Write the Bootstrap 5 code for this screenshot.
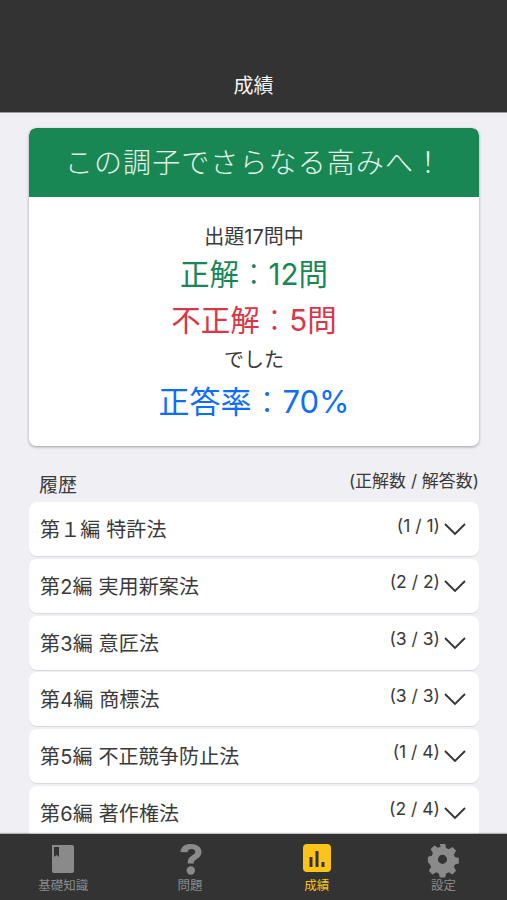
<!DOCTYPE html>
<html lang="ja">
<head>
<meta charset="utf-8">
<title>成績</title>
<link rel="stylesheet" href="https://cdn.jsdelivr.net/npm/bootstrap@5.3.0/dist/css/bootstrap.min.css">
<style>
html,body{height:100%;overflow:hidden}
body{font-family:Inter,"Noto Sans CJK JP",sans-serif;background:#efeff4;color:#3a3a3a}
.app-shell{height:900px}
.top-bar{height:114px;background:#333;color:#f2f2f2;font-size:20px;line-height:28px;padding-bottom:12px;border-bottom:1px solid #999}
.main-area{padding:15px 28px 0 29px;min-height:0;overflow:hidden}
.score-card{border-radius:7px;border:0;box-shadow:0 1px 3px rgba(0,0,0,.35);height:318px}
.score-head{background:#198754;color:#e4f3ea;height:69px;font-size:28px;font-weight:300;line-height:71px;border-radius:7px 7px 0 0;letter-spacing:1.100px}
.score-body{padding-top:25px}
.line-s{font-size:20px;line-height:30px}
.line-first{margin-bottom:-1px}
.line-l{font-size:29.500px;line-height:46px}
.line-then{margin-top:2px;margin-bottom:2px}
.line-xl{font-size:31px;line-height:50px}
.thin-colon{font-weight:300}
.hist-head{margin-top:23px;height:33px;padding-left:10px}
.hist-title{font-size:19px;line-height:30px;padding-top:2px}
.hist-note{font-size:17px;line-height:24px}
.hist-list{gap:2.700px}
.hist-row{height:54px;flex:none;border-radius:8px;background:#fff;padding:0 12px 0 11px;box-shadow:0 1px 1px rgba(0,0,0,.1);font-size:20px;letter-spacing:.15px}
.hist-name{padding-top:2px}
.hist-count{font-size:17.500px;line-height:24px;margin-top:-7px;margin-right:3px;letter-spacing:0}
.tab-bar{height:66px;flex:none;background:#333;box-shadow:0 -1px 1px rgba(0,0,0,.25)}
.tab-item{flex:1;color:#8a8a8a;font-size:12.500px;line-height:15px;padding-top:10px}
.tab-item.on{color:#fcc419}
.tab-ico{height:34px;width:34px}
</style>
</head>
<body>
<div class="app-shell d-flex flex-column">
  <header class="top-bar flex-none d-flex align-items-end justify-content-center">成績</header>
  <main class="main-area flex-grow-1">
    <section class="card score-card overflow-hidden">
      <div class="score-head text-center">この調子でさらなる高みへ！</div>
      <div class="score-body text-center">
        <div class="line-s line-first">出題17問中</div>
        <div class="line-l text-success">正解<span class="thin-colon">：</span>12問</div>
        <div class="line-l text-danger">不正解<span class="thin-colon">：</span>5問</div>
        <div class="line-s line-then">でした</div>
        <div class="line-xl text-primary">正答率<span class="thin-colon">：</span>70%</div>
      </div>
    </section>
    <div class="hist-head d-flex justify-content-between align-items-start">
      <div class="hist-title">履歴</div>
      <div class="hist-note">(正解数 / 解答数)</div>
    </div>
    <div class="hist-list d-flex flex-column">
      <div class="hist-row d-flex align-items-center justify-content-between"><span class="hist-name">第１編 特許法</span><span class="d-flex align-items-center"><span class="hist-count">(1 / 1)</span><svg width="24" height="14" viewBox="0 0 24 14"><path d="M2 2l10 10L22 2" fill="none" stroke="#333" stroke-width="1.800"/></svg></span></div>
      <div class="hist-row d-flex align-items-center justify-content-between"><span class="hist-name">第2編 実用新案法</span><span class="d-flex align-items-center"><span class="hist-count">(2 / 2)</span><svg width="24" height="14" viewBox="0 0 24 14"><path d="M2 2l10 10L22 2" fill="none" stroke="#333" stroke-width="1.800"/></svg></span></div>
      <div class="hist-row d-flex align-items-center justify-content-between"><span class="hist-name">第3編 意匠法</span><span class="d-flex align-items-center"><span class="hist-count">(3 / 3)</span><svg width="24" height="14" viewBox="0 0 24 14"><path d="M2 2l10 10L22 2" fill="none" stroke="#333" stroke-width="1.800"/></svg></span></div>
      <div class="hist-row d-flex align-items-center justify-content-between"><span class="hist-name">第4編 商標法</span><span class="d-flex align-items-center"><span class="hist-count">(3 / 3)</span><svg width="24" height="14" viewBox="0 0 24 14"><path d="M2 2l10 10L22 2" fill="none" stroke="#333" stroke-width="1.800"/></svg></span></div>
      <div class="hist-row d-flex align-items-center justify-content-between"><span class="hist-name">第5編 不正競争防止法</span><span class="d-flex align-items-center"><span class="hist-count">(1 / 4)</span><svg width="24" height="14" viewBox="0 0 24 14"><path d="M2 2l10 10L22 2" fill="none" stroke="#333" stroke-width="1.800"/></svg></span></div>
      <div class="hist-row d-flex align-items-center justify-content-between"><span class="hist-name">第6編 著作権法</span><span class="d-flex align-items-center"><span class="hist-count">(2 / 4)</span><svg width="24" height="14" viewBox="0 0 24 14"><path d="M2 2l10 10L22 2" fill="none" stroke="#333" stroke-width="1.800"/></svg></span></div>
    </div>
  </main>
  <nav class="tab-bar d-flex">
    <div class="tab-item d-flex flex-column align-items-center">
      <svg class="tab-ico" viewBox="0 0 34 34"><path d="M6 0h20a2 2 0 0 1 2 2v24a2 2 0 0 1-2 2H8a2 2 0 0 1-2-2z" transform="translate(0 1)" fill="#8a8a8a"/><path d="M8 3h5v10l-2.500-2L8 13z" fill="#333"/></svg>
      <span>基礎知識</span>
    </div>
    <div class="tab-item d-flex flex-column align-items-center">
      <svg class="tab-ico" viewBox="0 0 34 34"><path d="M7.500 8C8 2.500 12 0 18 0s10.500 3 10.500 8c0 4-2.500 5.500-5 7.200-2 1.300-2.800 2-2.800 4.300h-6c0-4 1-5.800 4-7.800 2-1.400 3.600-2.200 3.600-3.900 0-1.800-1.600-2.900-3.700-2.900-2.300 0-3.800 1.200-4.100 3.300z" fill="#8a8a8a"/><circle cx="17.800" cy="26.500" r="4.200" fill="#8a8a8a"/></svg>
      <span>問題</span>
    </div>
    <div class="tab-item on d-flex flex-column align-items-center">
      <svg class="tab-ico" viewBox="0 0 34 34"><rect x="3" y="0" width="28" height="28" rx="4" fill="#fcc419"/><path d="M9.500 13h3v10h-3zM15.500 7h3v16h-3zM21.500 18h3v5h-3z" fill="#333"/></svg>
      <span>成績</span>
    </div>
    <div class="tab-item d-flex flex-column align-items-center">
      <svg class="tab-ico" viewBox="0 0 34 34"><path fill="#8a8a8a" fill-rule="evenodd" d="M14 1h6l1 4.500 3 1.300 4-2.500 4 4.200-2.500 4 1.200 3 4.300 1v6l-4.300 1-1.200 3 2.500 4-4 4.200-4-2.500-3 1.300-1 4.500h-6l-1-4.500-3-1.300-4 2.500-4-4.200 2.500-4-1.200-3L1 21v-6l4.300-1 1.200-3-2.500-4 4-4.200 4 2.500 3-1.300zm3 12a5 5 0 1 0 0 10 5 5 0 0 0 0-10z" transform="translate(0 -1) scale(.91)"/></svg>
      <span>設定</span>
    </div>
  </nav>
</div>
<script src="https://cdn.jsdelivr.net/npm/bootstrap@5.3.0/dist/js/bootstrap.bundle.min.js"></script>
</body>
</html>
